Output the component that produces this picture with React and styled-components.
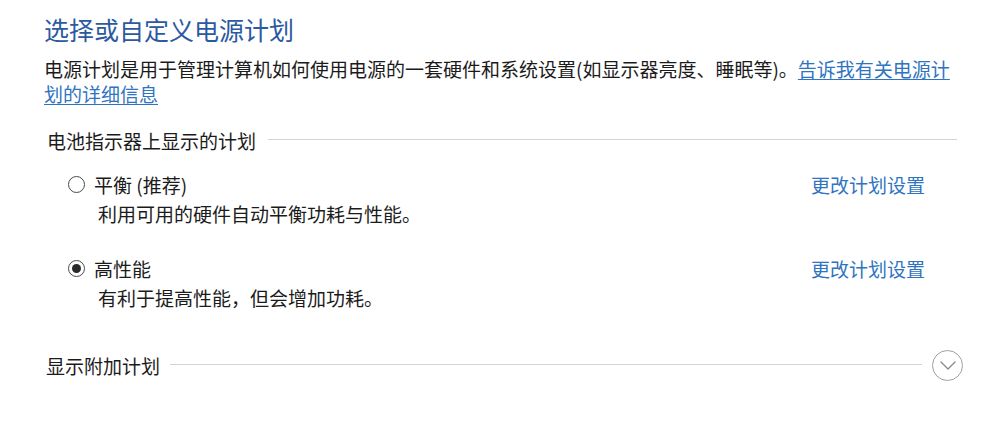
import React from "react";
import styled, { createGlobalStyle } from "styled-components";

const Global = createGlobalStyle`
  html, body { margin: 0; padding: 0; background: #ffffff; }
  body {
    font-family: "Noto Sans CJK SC", "Noto Sans", sans-serif;
    color: #1b1b1b;
    -webkit-font-smoothing: antialiased;
  }
`;

const Page = styled.div`
  width: 910px;
  padding: 14px 0 0 44px;
  display: flex;
  flex-direction: column;
`;

const Title = styled.h1`
  margin: 0;
  font-size: 25px;
  line-height: 30px;
  font-weight: 400;
  color: #2b5aa0;
`;

const Intro = styled.p`
  margin: 12px 0 0;
  font-size: 19px;
  line-height: 25px;
  color: #1b1b1b;
`;

const Link = styled.a`
  color: #2f74c0;
  text-decoration: underline;
  text-underline-offset: 2px;
  cursor: pointer;
`;

const GroupHeader = styled.div`
  display: flex;
  align-items: center;
  gap: ${(p) => p.$gap || 12}px;
  margin-top: ${(p) => p.$top}px;
  padding-left: ${(p) => p.$indent}px;
  width: ${(p) => p.$width || 910}px;
  min-height: 25px;
  font-size: 19px;
  line-height: 25px;
  color: #1b1b1b;
  white-space: nowrap;
`;

const Rule = styled.div`
  flex: 1;
  height: 1px;
  margin-top: -2px;
  background: #d4d4d4;
`;

const PlanList = styled.div`
  display: flex;
  flex-direction: column;
  padding: 0 29px 0 24px;
`;

const Plan = styled.div`
  display: flex;
  flex-direction: column;
  margin-top: ${(p) => p.$top}px;
`;

const PlanRow = styled.div`
  display: flex;
  align-items: center;
  justify-content: space-between;
  height: 25px;
`;

const RadioLabel = styled.label`
  display: flex;
  align-items: center;
  gap: 9px;
  font-size: 19px;
  line-height: 25px;
  color: #1b1b1b;
  cursor: pointer;
`;

const Radio = styled.span`
  box-sizing: border-box;
  flex: 0 0 17px;
  width: 17px;
  height: 17px;
  border-radius: 50%;
  border: 1.5px solid #4a4a4a;
  background: #fff;
  display: flex;
  align-items: center;
  justify-content: center;
  &::after {
    content: "";
    width: 9px;
    height: 9px;
    border-radius: 50%;
    background: ${(p) => (p.$checked ? "#2a2a2a" : "transparent")};
  }
`;

const PlanLink = styled.a`
  font-size: 19px;
  line-height: 25px;
  color: #2f74c0;
  cursor: pointer;
`;

const PlanDesc = styled.div`
  margin-top: 4px;
  padding-left: 30px;
  font-size: 19px;
  line-height: 25px;
  color: #1b1b1b;
`;

const Expand = styled.button`
  box-sizing: border-box;
  flex: 0 0 31px;
  width: 31px;
  height: 31px;
  border-radius: 50%;
  border: 1.5px solid #a0a0a0;
  background: #fff;
  padding: 0;
  display: flex;
  align-items: center;
  justify-content: center;
  cursor: pointer;
`;

const plans = [
  { name: "平衡 (推荐)", desc: "利用可用的硬件自动平衡功耗与性能。", checked: false, top: 19 },
  { name: "高性能", desc: "有利于提高性能，但会增加功耗。", checked: true, top: 30 },
];

export default function App() {
  return (
    <>
      <Global />
      <Page>
        <Title>选择或自定义电源计划</Title>
        <Intro>
          电源计划是用于管理计算机如何使用电源的一套硬件和系统设置(如显示器亮度、睡眠等)。
          <Link>告诉我有关电源计划的详细信息</Link>
        </Intro>

        <GroupHeader $top={22} $indent={3}>
          <span>电池指示器上显示的计划</span>
          <Rule />
        </GroupHeader>

        <PlanList>
          {plans.map((p) => (
            <Plan key={p.name} $top={p.top}>
              <PlanRow>
                <RadioLabel>
                  <Radio $checked={p.checked} />
                  {p.name}
                </RadioLabel>
                <PlanLink>更改计划设置</PlanLink>
              </PlanRow>
              <PlanDesc>{p.desc}</PlanDesc>
            </Plan>
          ))}
        </PlanList>

        <GroupHeader $top={40} $indent={2} $width={917} $gap={10}>
          <span>显示附加计划</span>
          <Rule />
          <Expand aria-label="展开">
            <svg width="16" height="9" viewBox="0 0 16 9" fill="none">
              <path d="M1 1 L8 8 L15 1" stroke="#8a8a8a" strokeWidth="1.4" strokeLinecap="round" strokeLinejoin="round" />
            </svg>
          </Expand>
        </GroupHeader>
      </Page>
    </>
  );
}
